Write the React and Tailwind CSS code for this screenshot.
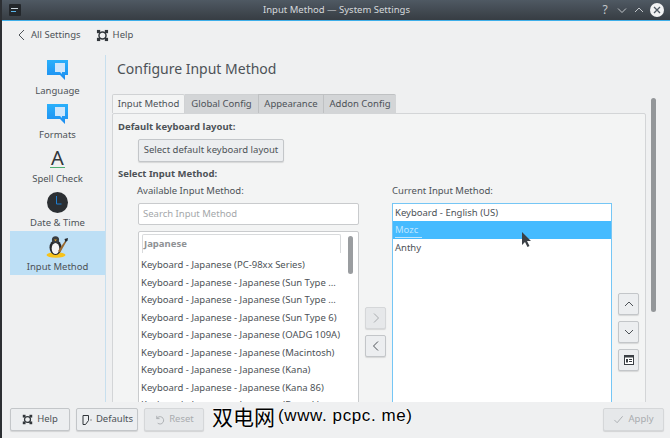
import React from 'react';

const rows = [
  'Keyboard - Japanese (PC-98xx Series)',
  'Keyboard - Japanese - Japanese (Sun Type ...',
  'Keyboard - Japanese - Japanese (Sun Type ...',
  'Keyboard - Japanese - Japanese (Sun Type 6)',
  'Keyboard - Japanese - Japanese (OADG 109A)',
  'Keyboard - Japanese - Japanese (Macintosh)',
  'Keyboard - Japanese - Japanese (Kana)',
  'Keyboard - Japanese - Japanese (Kana 86)',
  'Keyboard - Japanese - Japanese (Dvorak)',
];

function Bubble() {
  return (
    <svg width="21" height="21" viewBox="0 0 21 21">
      <defs>
        <linearGradient id="bub" x1="0" y1="0" x2="0" y2="1">
          <stop offset="0" stopColor="#2ab0fb" />
          <stop offset="1" stopColor="#1c8cf0" />
        </linearGradient>
      </defs>
      <path d="M0 0h21v15h-3v5l-5-5H0z" fill="url(#bub)" />
      <path d="M8 3h10v9h-3v2l-2-2H8z" fill="#cfe6fb" />
    </svg>
  );
}

function HelpIcon({ size = 13, color = '#31363b' }) {
  return (
    <svg width={size} height={size} viewBox="0 0 14 14" fill="none" stroke={color}>
      <circle cx="7" cy="7" r="3.800" strokeWidth="1.600" />
      <rect x="1" y="1" width="3.500" height="3.500" fill={color} stroke="none" />
      <rect x="9.500" y="1" width="3.500" height="3.500" fill={color} stroke="none" />
      <rect x="1" y="9.500" width="3.500" height="3.500" fill={color} stroke="none" />
      <rect x="9.500" y="9.500" width="3.500" height="3.500" fill={color} stroke="none" />
    </svg>
  );
}

function Penguin() {
  return (
    <svg width="23" height="22" viewBox="0 0 23 22">
      <ellipse cx="10" cy="19" rx="9.500" ry="2.800" fill="#f7c21a" />
      <ellipse cx="9.500" cy="11.500" rx="6" ry="7.500" fill="#26282b" />
      <circle cx="9.500" cy="3.800" r="3.600" fill="#3a3d40" />
      <ellipse cx="9.500" cy="12.500" rx="3.800" ry="5.500" fill="#f4f4f4" />
      <path d="M8 3.500h3L9.500 5.200z" fill="#e8a020" />
      <path d="M12 15l7-10 1.200 1-6 10.500z" fill="#9a6a30" />
      <path d="M18.500 3l3.500-1-.5 2.500-2 2z" fill="#26282b" />
    </svg>
  );
}

function NavItem({ label, icon, active }) {
  return (
    <div className={`flex h-[44px] flex-col items-center pt-[3px] ${active ? 'bg-[#bddff5]' : ''}`}>
      <div className="flex h-[25px] items-center justify-center">{icon}</div>
      <span className="mt-[1px] text-[9.500px] leading-[14px]">{label}</span>
    </div>
  );
}

function KdeButton({ children, disabled, className = '' }) {
  return (
    <div
      className={`flex items-center justify-center rounded-[2px] border text-[9.500px] shadow-[0_1px_1px_rgba(0,0,0,0.12)] ${
        disabled ? 'border-[#d5d7d9] bg-[#e6e8ea] text-[#a9acaf]' : 'border-[#c3c6c9] bg-[#eceef0] text-[#4d5257]'
      } ${className}`}
    >
      {children}
    </div>
  );
}

function Chevron({ d, color = '#4d5257' }) {
  return (
    <svg width="12" height="12" viewBox="0 0 12 12" fill="none" stroke={color} strokeWidth="1">
      <path d={d} />
    </svg>
  );
}

export default function App() {
  return (
    <div className="relative flex h-[438px] w-[670px] flex-col overflow-hidden border-l-2 border-[#2c2f33] bg-[#eff0f1] font-['Noto_Sans',sans-serif] text-[#4d5257]">
      {/* Title bar */}
      <div className="-ml-[2px] flex h-[20px] shrink-0 items-center bg-gradient-to-b from-[#4f5963] to-[#373d43] pl-[9px] pr-[6px]">
        <div className="flex w-[70px]">
          <div className="flex h-[12px] w-[12px] flex-col justify-center gap-[2px] rounded-[1px] bg-[#23272b] px-[2px]">
            <div className="h-[1px] w-[7px] bg-[#c9d5dc]" />
            <div className="h-[1px] w-[5px] bg-[#5ab5e8]" />
          </div>
        </div>
        <div className="flex-1 text-center text-[9.500px] leading-[20px] text-[#d6d9dc]">Input Method — System Settings</div>
        <div className="flex w-[70px] items-center justify-end gap-[5px] text-[#c3c7cb]">
          <span className="w-[12px] text-center text-[12px] leading-none">?</span>
          <svg width="12" height="12" viewBox="0 0 12 12" fill="none" stroke="#c3c7cb"><path d="M2 4.500l4 4 4-4" /></svg>
          <svg width="12" height="12" viewBox="0 0 12 12" fill="none" stroke="#c3c7cb"><path d="M2 8l4-4 4 4" /></svg>
          <svg width="14" height="14" viewBox="0 0 14 14"><circle cx="7" cy="7" r="7" fill="#f1f2f3" /><path d="M4 4l6 6M10 4l-6 6" stroke="#4f5963" strokeWidth="1.300" /></svg>
        </div>
      </div>
      <div className="-ml-[2px] h-[1px] shrink-0 bg-[#3daee9]" />

      {/* Toolbar */}
      <div className="flex h-[34px] shrink-0 items-center pb-[6px] pl-[14px] text-[9.500px]">
        <Chevron d="M8 1L3 6l5 5" />
        <span className="ml-[3px]">All Settings</span>
        <span className="ml-[15px] flex"><HelpIcon /></span>
        <span className="ml-[4px]">Help</span>
      </div>

      <div className="flex min-h-0 flex-1">
        {/* Sidebar */}
        <div className="flex w-[104px] shrink-0 flex-col border-r border-[#c7dfee] pl-[8px]">
          <div className="w-[95px]">
            <NavItem label="Language" icon={<Bubble />} />
            <NavItem label="Formats" icon={<Bubble />} />
            <NavItem
              label="Spell Check"
              icon={
                <div className="flex flex-col items-center">
                  <span className="text-[20px] leading-[18px] text-[#31363b]">A</span>
                  <div className="h-[1px] w-[15px] bg-[#4caf72]" />
                </div>
              }
            />
            <NavItem
              label="Date & Time"
              icon={
                <svg width="21" height="21" viewBox="0 0 21 21" fill="none">
                  <circle cx="10.500" cy="10.500" r="10.500" fill="#2b2f33" />
                  <path d="M9.500 4v8h5" stroke="#1f7fd0" strokeWidth="1" />
                </svg>
              }
            />
            <NavItem label="Input Method" icon={<Penguin />} active />
          </div>
        </div>

        {/* Content */}
        <div className="min-w-0 flex-1 pl-[6px]">
          <div className="ml-[5px] mt-[4px] text-[14px] leading-[20px] text-[#4d5257]">Configure Input Method</div>

          <div className="mt-[15px] flex">
            <div className="w-[534px]">
              {/* Tabs */}
              <div className="flex h-[19px] text-[9.500px] leading-[18px]">
                <div className="w-[73px] rounded-t-[2px] border border-b-0 border-[#d0d2d4] bg-[#f3f4f4] text-center">Input Method</div>
                <div className="w-[73px] border-t border-[#cfd1d3] bg-[#d3d5d7] text-center">Global Config</div>
                <div className="w-[65px] border-l border-t border-[#bfc1c3] bg-[#d3d5d7] text-center">Appearance</div>
                <div className="w-[73px] rounded-tr-[2px] border-l border-t border-[#bfc1c3] bg-[#d3d5d7] text-center">Addon Config</div>
              </div>

              {/* Panel */}
              <div className="h-[400px] rounded-[2px] border border-[#d3d5d7] bg-[#f3f4f4] pl-[5px] pt-[6px]">
                <div className="text-[9.500px] font-bold leading-[14px]">Default keyboard layout:</div>
                <KdeButton className="ml-[20px] mt-[5px] h-[23px] w-[146px]">Select default keyboard layout</KdeButton>
                <div className="mt-[5px] text-[9.500px] font-bold leading-[14px]">Select Input Method:</div>

                <div className="mt-[3px] flex">
                  <div className="ml-[19px] w-[222px]">
                    <div className="text-[9.500px] leading-[14px]">Available Input Method:</div>
                    <div className="ml-[1px] mt-[5px] flex h-[22px] w-[221px] items-center rounded-[2px] border border-[#c9cbcd] bg-white pl-[4px] text-[9.500px] text-[#a4a7aa]">
                      Search Input Method
                    </div>
                    <div className="relative ml-[1px] mt-[6px] h-[200px] w-[221px] rounded-[2px] border border-[#c9cbcd] bg-white pl-[2px] pt-[2px]">
                      <div className="ml-[1px] h-[19px] w-[199px] rounded-t-[2px] border-l border-r border-t border-[#d8dadc] pl-[1px] text-[9.500px] font-bold leading-[18px] text-[#8f9295]">
                        Japanese
                      </div>
                      <div className="mt-[3px] w-[205px] overflow-hidden whitespace-nowrap text-[9.500px]">
                        {rows.map((r, i) => (
                          <div key={i} className="h-[17.500px] leading-[17.500px]">{r}</div>
                        ))}
                      </div>
                      <div className="absolute left-[209px] top-[4px] h-[38px] w-[5px] rounded-full bg-[#9a9da0]" />
                    </div>
                  </div>

                  <div className="ml-[6px] flex w-[22px] flex-col pt-[123px]">
                    <KdeButton disabled className="h-[22px] w-[21px]">
                      <Chevron d="M4 1.500L8.500 6 4 10.500" color="#a9acaf" />
                    </KdeButton>
                    <KdeButton className="mt-[6px] h-[22px] w-[21px]">
                      <Chevron d="M8 1.500L3.500 6 8 10.500" />
                    </KdeButton>
                  </div>

                  <div className="ml-[5px] w-[220px]">
                    <div className="text-[9.500px] leading-[14px]">Current Input Method:</div>
                    <div className="mt-[5px] h-[220px] border border-[#75c6f5] bg-white text-[9.500px]">
                      <div className="h-[17px] pl-[2px] leading-[17px]">Keyboard - English (US)</div>
                      <div className="h-[18px] bg-[#45bbff] pl-[2px] leading-[17px] text-[#bfe6ff]">
                        <span className="inline-block w-[27px] border-b border-[#bfe6ff] leading-[14px]">Mozc</span>
                      </div>
                      <div className="h-[17.500px] pl-[2px] leading-[17.500px]">Anthy</div>
                    </div>
                  </div>

                  <div className="ml-[6px] flex w-[21px] flex-col pt-[109px]">
                    <KdeButton className="h-[22px] w-[21px]"><Chevron d="M2 8l4-4 4 4" /></KdeButton>
                    <KdeButton className="mt-[6px] h-[22px] w-[21px]"><Chevron d="M2 4l4 4 4-4" /></KdeButton>
                    <KdeButton className="mt-[6px] h-[22px] w-[21px]">
                      <svg width="10" height="10" viewBox="0 0 10 10">
                        <rect x="0.500" y="0.500" width="9" height="9" fill="#fff" stroke="#3b4045" />
                        <rect x="0" y="0" width="10" height="2.500" fill="#3b4045" />
                        <rect x="2" y="4" width="2" height="3.500" fill="#3b4045" />
                        <path d="M5 4.500h3M5 6.500h3" stroke="#3b4045" />
                      </svg>
                    </KdeButton>
                  </div>
                </div>
              </div>
            </div>

            {/* Page scrollbar */}
            <div className="ml-[5px] mt-[4px] h-[214px] w-[5px] rounded-full bg-[#939699]" />
          </div>
        </div>
      </div>

      {/* Footer */}
      <div className="relative flex h-[36px] shrink-0 items-start bg-[#eff0f1] pl-[8px] pr-[6px] pt-[6px]">
        <KdeButton className="h-[23px] w-[60px] gap-[4px]"><HelpIcon size={11} />Help</KdeButton>
        <KdeButton className="ml-[6px] h-[23px] w-[62px] gap-[3px]">
          <svg width="12" height="12" viewBox="0 0 12 12" fill="none" stroke="#31363b">
            <path d="M2 1.500h5.500v5l-3 4H2zM9.500 6h1" />
          </svg>
          Defaults
        </KdeButton>
        <KdeButton disabled className="ml-[6px] h-[23px] w-[60px] gap-[4px]">
          <svg width="11" height="11" viewBox="0 0 12 12" fill="none" stroke="#a9acaf">
            <path d="M3 2v3h3M3 5a4 4 0 1 1 1 5" />
          </svg>
          Reset
        </KdeButton>
        <KdeButton disabled className="ml-auto h-[23px] w-[61px] gap-[4px]">
          <svg width="11" height="11" viewBox="0 0 12 12" fill="none" stroke="#a9acaf"><path d="M1.500 6.500l3 3 6-7" /></svg>
          Apply
        </KdeButton>
      </div>

      {/* Cursor over the current list */}
      <svg className="absolute left-[519px] top-[232px]" width="11" height="15" viewBox="0 0 11 15">
        <path d="M1 0v13l3-3 2.500 5 2-1L6 9h4z" fill="#3b4045" />
      </svg>

      {/* Watermark */}
      <div className="absolute left-[210px] top-[402px] flex items-center whitespace-nowrap text-black [text-shadow:0_0_2px_#fff,0_0_2px_#fff]">
        <span className="font-['Noto_Sans_CJK_SC',sans-serif] text-[21px] leading-[26px]">双电网</span>
        <span className="ml-[3px] pt-[1px] font-['Liberation_Sans',sans-serif] text-[17px] leading-[26px] tracking-[0.6px]">(www. pcpc. me)</span>
      </div>
    </div>
  );
}
